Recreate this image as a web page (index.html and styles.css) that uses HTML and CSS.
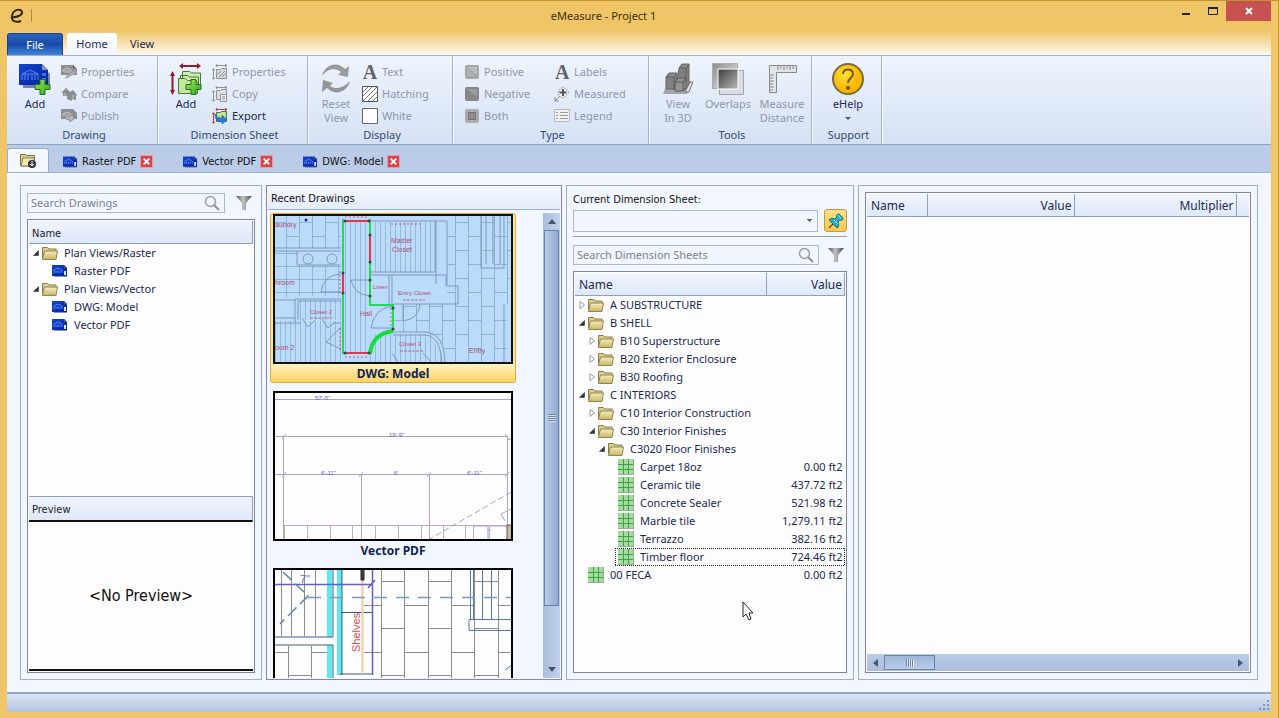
FILE: index.html
```html
<!DOCTYPE html>
<html lang="en">
<head>
  <meta charset="UTF-8">
  <title>eMeasure - Project 1</title>
  <link rel="stylesheet" href="styles.css">
</head>
<body>

  <!-- shared icons -->
  <svg class="sprite" aria-hidden="true">
    <defs>
      <linearGradient id="gFolder" x1="0" y1="0" x2="0" y2="1"><stop offset="0" stop-color="#f4edc0"/><stop offset="1" stop-color="#c9b663"/></linearGradient>
      <linearGradient id="gBlue" x1="0" y1="0" x2="1" y2="1"><stop offset="0" stop-color="#1546cf"/><stop offset="1" stop-color="#03229c"/></linearGradient>
      <linearGradient id="gGreen" x1="0" y1="0" x2="1" y2="1"><stop offset="0" stop-color="#a0e860"/><stop offset="1" stop-color="#2fa51c"/></linearGradient>
      <linearGradient id="gGrey" x1="0" y1="0" x2="1" y2="1"><stop offset="0" stop-color="#8a8a8a"/><stop offset="1" stop-color="#f0f0f0"/></linearGradient>
      <linearGradient id="gDark" x1="0" y1="0" x2="1" y2="1"><stop offset="0" stop-color="#3c3c3c"/><stop offset="1" stop-color="#b8b8b8"/></linearGradient>
      <linearGradient id="gFunnel" x1="0" y1="0" x2="1" y2="0"><stop offset="0" stop-color="#555"/><stop offset=".45" stop-color="#c4c4c4"/><stop offset="1" stop-color="#444"/></linearGradient>
      <radialGradient id="gHelp" cx=".4" cy=".35"><stop offset="0" stop-color="#ffdf3a"/><stop offset="1" stop-color="#f8b800"/></radialGradient>
    </defs>
    <symbol id="folder" viewBox="0 0 16 14">
      <path d="M.5 12.500V1.500h5l1.500 1.500h7v2" fill="#dccf8e" stroke="#8b7c45"/>
      <path d="M.5 12.500l2-7.500h13l-1.500 8.500H.5z" fill="url(#gFolder)" stroke="#8f8350"/>
    </symbol>
    <symbol id="drawing" viewBox="0 0 16 12">
      <path d="M2 2h11l2 3v7H2z" fill="#8191b5"/>
      <path d="M0 0h12l3 3v8H0z" fill="url(#gBlue)"/>
      <path d="M2 8V5l4-2 4 2v3M4 8V6M6 8V5M8 8V6" fill="none" stroke="#5b85f2"/>
      <path d="M12 6h2v4h-2z" fill="#dce7ff"/>
      <path d="M12 0l3 3h-3z" fill="#4a5878"/>
    </symbol>
    <symbol id="drawing-grey" viewBox="0 0 16 16">
      <path d="M0 1h12l4 4v6H0z" fill="#8c8e92"/>
      <path d="M2 8V6l4-2 4 2v2M4 9V6M6 9V6M8 9V6" fill="none" stroke="#c9cbd0"/>
      <path d="M12 1l3 3h-3z" fill="#666"/>
      <path d="M5 12l9-6 1 3-8 5-3 1z" fill="#a8aaae"/>
    </symbol>
    <symbol id="publish" viewBox="0 0 16 16">
      <path d="M0 1h12l4 4v6H0z" fill="#8c8e92"/>
      <path d="M2 8V6l4-2 4 2v2M4 9V6M6 9V6M8 9V6" fill="none" stroke="#c9cbd0"/>
      <path d="M3 8c1 3 4 4 6 4v2l5-4-5-4v2C7 9 5 9 3 8z" fill="#b3b5b9" stroke="#8c8e92"/>
    </symbol>
    <symbol id="compare" viewBox="0 0 16 16">
      <path d="M0 7l5-5 4 4 3-2 4 5-1 1v4l-4-1v2l-5-2v-3H2V7z" fill="#8c8e92"/>
      <path d="M4 7v3M12 9v3" fill="none" stroke="#c9cbd0"/>
    </symbol>
    <symbol id="big-drawing" viewBox="0 0 32 32">
      <path d="M4 4h20l7 7v14H4z" fill="#7484aa"/>
      <path d="M0 1h23l6 6v15H0z" fill="url(#gBlue)"/>
      <path d="M23 1l6 6h-6z" fill="#8797b5"/>
      <path d="M3 17v-6l8-4 8 4v6M3 11h16M6 17v-5M9 17v-5M13 17v-5M16 17v-5" fill="none" stroke="#5b8bf5"/>
      <path d="M23 10h4v3h-4zM23 15h4v3h-4z" fill="#3f6ceb"/>
      <use href="#plus"/>
    </symbol>
    <symbol id="plus" viewBox="0 0 32 32">
      <path d="M21 16.500h5v5h5v5h-5v5h-5v-5h-5v-5h5z" fill="url(#gGreen)" stroke="#24701b"/>
    </symbol>
    <symbol id="big-sheet" viewBox="0 0 32 32">
      <path d="M11 3h18M2.500 10v19" stroke="#8c1d2b" stroke-width="2"/>
      <path d="M13 0v6L9 3zM27 0v6l4-3zM0 13h5L2.500 8zM0 27h5l-2.500 5z" fill="#8c1d2b"/>
      <path d="M12.500 24V8.500h7l2 1.500h9V24zM10.500 27V12.500h7l2 1.500h9V27z" fill="#d5edb4" stroke="#3e7d35"/>
      <path d="M8.500 30.500v-15h7l2 2h9l1 3v10z" fill="#c5e79c" stroke="#3e7d35"/>
      <use href="#plus"/>
    </symbol>
    <symbol id="sheet-grey" viewBox="0 0 16 16">
      <path d="M4 1.500h11M1.500 5v10M5 0L4 1.500 5 3M13 0l2 1.500L13 3M0 6l1.500-1L3 6M0 14l1.500 1L3 14" fill="none" stroke="#8f9195"/>
      <path d="M4.500 14.500v-9h4l1-1h5v10z" fill="#d8d9db" stroke="#8f9195"/>
      <path d="M7 13l6-6M10 13l4-4M6 10l3-3" stroke="#8f9195"/>
    </symbol>
    <symbol id="copy" viewBox="0 0 16 16">
      <path d="M4 1.500h11M1.500 5v10M5 0L4 1.500 5 3M13 0l2 1.500L13 3M0 6l1.500-1L3 6M0 14l1.500 1L3 14" fill="none" stroke="#8f9195"/>
      <path d="M4.500 13.500v-9h4l1-1h5v10z" fill="#dedfe1" stroke="#8f9195"/>
      <path d="M8.500 15.500v-7h6v7zM10 11h3M10 13h3" fill="#f0f0f1" stroke="#8f9195"/>
    </symbol>
    <symbol id="export" viewBox="0 0 16 16">
      <path d="M4 1.500h11M1.500 5v10M5 0L4 1.500 5 3M13 0l2 1.500L13 3M0 6l1.500-1L3 6M0 14l1.500 1L3 14" fill="none" stroke="#c0394a"/>
      <path d="M4.500 13.500v-9h4l1-1h5v10z" fill="#c1e49b" stroke="#3e7d35"/>
      <path d="M3 6c1 3 4 4 7 4V7l5 5-5 4v-2c-5 0-7-3-7-8z" fill="#2e7be0" stroke="#1a4c9c" stroke-width=".5"/>
    </symbol>
    <symbol id="reset" viewBox="0 0 32 32">
      <path d="M2 13C4 4 13-1 21 3l4 3 4-3-1 11-10-2 3-3C15 4 7 6 2 13z" fill="#999b9f"/>
      <path d="M30 18c-2 9-11 14-19 10l-4-3-5 4 1-12 10 3-3 3c6 4 14 2 20-5z" fill="#929498"/>
    </symbol>
    <symbol id="hatch" viewBox="0 0 16 16">
      <path d="M.5.500h15v15H.5z" fill="#fff" stroke="#555"/>
      <path d="M1 6l5-5M1 10l9-9M1 15L15 1M6 15l9-9M11 15l4-4" stroke="#777"/>
    </symbol>
    <symbol id="white" viewBox="0 0 16 16"><path d="M.5.500h15v15H.5z" fill="#fff" stroke="#666"/></symbol>
    <symbol id="positive" viewBox="0 0 16 16">
      <rect x="1" y="1" width="14" height="14" rx="2" fill="#a3a5a8"/>
      <path d="M3 3h10v8z" fill="#b9bbbe"/><path d="M3 3v9h8z" fill="#b0b2b5"/>
    </symbol>
    <symbol id="negative" viewBox="0 0 16 16">
      <rect x="1" y="1" width="14" height="14" rx="2" fill="#85878b"/>
      <path d="M3 3h10v8z" fill="#9b9da0"/>
    </symbol>
    <symbol id="both" viewBox="0 0 16 16">
      <rect x="1" y="1" width="14" height="14" rx="2" fill="#a9abae"/>
      <path d="M4.500 4.500h7v7h-7z" fill="#8c8e91" stroke="#707275"/>
    </symbol>
    <symbol id="measured" viewBox="0 0 16 16">
      <path d="M5 4l4-3 6 5-5 6-6-2z" fill="#efefef" stroke="#97999d" stroke-dasharray="2 1"/>
      <path d="M9 3v7M5.500 6.500h7" stroke="#55575a" stroke-width="2"/>
      <path d="M6 10l-5 5M1 11v4h4" fill="none" stroke="#8b8d91"/>
    </symbol>
    <symbol id="legend" viewBox="0 0 16 16">
      <path d="M.5 1.500h15v12H.5z" fill="#f1f1f1" stroke="#b6b8bb"/>
      <path d="M2 4.500h2M2 7.500h2M2 10.500h2M6 4.500h8M6 7.500h8M6 10.500h8" stroke="#999b9e"/>
    </symbol>
    <symbol id="view3d" viewBox="0 0 32 32">
      <path d="M1 31l5-13h22l3 2-6 11z" fill="#a5a5a7"/>
      <path d="M4 14l3-4h8v7l2-11V5l3-4h7v20l-3 5H4z" fill="#818183" stroke="#666"/>
      <path d="M4 14h8l3-4M12 14v13M17 5h7l3-4M24 5v13M13 19l3-4h8l-3 4zM13 19v9h8v-9M21 28l3-4v-9" fill="#939395" stroke="#5c5c5e"/>
      <path d="M23 29l5-10h3l-4 10z" fill="#ddd" stroke="#777"/>
    </symbol>
    <symbol id="overlaps" viewBox="0 0 32 32">
      <path d="M.5.500h25v25H.5z" fill="url(#gGrey)" stroke="#a9abad"/>
      <path d="M7.500 7.500h24v24h-24z" fill="#d9dce2" stroke="#a1a3a6"/>
      <path d="M6 6h20v20H6z" fill="url(#gDark)" stroke="#fff"/>
    </symbol>
    <symbol id="ruler" viewBox="0 0 32 32">
      <path d="M3.500 2.500h27v7h-20v20h-7z" fill="#e3e4e8" stroke="#88898d"/>
      <path d="M4 12h4M4 15h3M4 18h4M4 21h3M4 24h4M4 27h3M12 3v4M15 3v3M18 3v4M21 3v3M24 3v4M27 3v3" stroke="#88898d"/>
    </symbol>
    <symbol id="help" viewBox="0 0 32 32">
      <circle cx="16" cy="16" r="15" fill="url(#gHelp)" stroke="#7c6c3b" stroke-width="2"/>
      <path d="M11 11c0-6 10-6 10 0 0 4-5 4-5 9" fill="none" stroke="#74571a" stroke-width="2"/>
      <circle cx="16" cy="25" r="2" fill="#74571a"/>
    </symbol>
    <symbol id="home-tab" viewBox="0 0 16 16">
      <path d="M.5 13V1.500h5l1 1h8V13z" fill="#d9cd8a" stroke="#7e7140"/>
      <path d="M1 13l2-8h11v8z" fill="#efe7b6" stroke="#8f8350"/>
      <circle cx="12" cy="11" r="4" fill="#33343a"/>
      <path d="M12 8v4M10 11l2 2 2-2" fill="none" stroke="#fff"/>
    </symbol>
    <symbol id="close" viewBox="0 0 14 14">
      <path d="M.5.500h13v13H.5z" fill="#d9434a" stroke="#eba0a2"/>
      <path d="M4 4l6 6M10 4l-6 6" stroke="#fff" stroke-width="2"/>
    </symbol>
    <symbol id="search" viewBox="0 0 16 16">
      <circle cx="6.500" cy="6.500" r="5" fill="#eef4fd" stroke="#9aa0ab" stroke-width="1.500"/>
      <path d="M10 10l5 5" stroke="#8c8e94" stroke-width="2"/>
    </symbol>
    <symbol id="funnel" viewBox="0 0 16 16">
      <path d="M0 1h16L10 8v7H6V8z" fill="url(#gFunnel)"/>
    </symbol>
    <symbol id="pin" viewBox="0 0 16 16">
      <path d="M6 10l-5 5" stroke="#555" stroke-width="1.500"/>
      <path d="M1 7c1-2 4-2 6-1l2-2c-1-2 0-3 2-3l4 4c0 2-1 3-3 2l-2 2c1 3 1 5-1 6z" fill="#27afc4" stroke="#146f86"/>
      <path d="M6 7l4 4M10 2l3 4" stroke="#8fe3ee"/>
    </symbol>
    <symbol id="grid" viewBox="0 0 16 16">
      <path d="M0 0h16v16H0z" fill="#9aa79a"/>
      <path d="M0 0h15v15H0z" fill="#a3dd9d"/>
      <path d="M5.500 0v15M10.500 0v15M0 5.500h15M0 10.500h15" stroke="#3f9f45"/>
    </symbol>
    <symbol id="open" viewBox="0 0 8 8"><path d="M6.500 1.500v5h-5z" fill="#333" stroke="#222" stroke-width=".5"/></symbol>
    <symbol id="shut" viewBox="0 0 8 8"><path d="M2 .5v7L6.500 4z" fill="#fff" stroke="#999"/></symbol>
  </svg>

  <div class="window">
    <header class="titlebar">
      <svg class="app-logo" viewBox="0 0 24 16" aria-hidden="true">
        <path d="M2 9c5 1 12-2 11-5-1-4-9-3-10 4-1 5 4 7 9 5" fill="none" stroke="#2e2708" stroke-width="2"/>
        <path d="M22.500 1v13" stroke="#b58d3c"/>
      </svg>
      <h1 class="title">eMeasure - Project 1</h1>
      <div class="window-buttons">
        <button aria-label="Minimize"><svg viewBox="0 0 10 10"><path d="M1 8h8" stroke="#222" stroke-width="2"/></svg></button>
        <button aria-label="Maximize"><svg viewBox="0 0 10 10"><path d="M.5 2h9v6.500h-9z" fill="none" stroke="#222"/><path d="M0 2h10" stroke="#222" stroke-width="2"/></svg></button>
        <button class="close-window" aria-label="Close"><svg viewBox="0 0 10 10"><path d="M2 2l6 6M8 2L2 8" stroke="#fff" stroke-width="2"/></svg></button>
      </div>
    </header>

    <nav class="ribbon-tabs">
      <button class="file-tab">File</button>
      <button class="ribbon-tab active">Home</button>
      <button class="ribbon-tab">View</button>
    </nav>

    <section class="ribbon">
      <div class="group group-drawing">
        <div class="group-body">
          <button class="big"><svg><use href="#big-drawing"/></svg>Add</button>
          <div class="stack">
            <button class="small" disabled><svg><use href="#drawing-grey"/></svg>Properties</button>
            <button class="small" disabled><svg><use href="#compare"/></svg>Compare</button>
            <button class="small" disabled><svg><use href="#publish"/></svg>Publish</button>
          </div>
        </div>
        <div class="group-name">Drawing</div>
      </div>
      <div class="group group-sheet">
        <div class="group-body">
          <button class="big"><svg><use href="#big-sheet"/></svg>Add</button>
          <div class="stack">
            <button class="small" disabled><svg><use href="#sheet-grey"/></svg>Properties</button>
            <button class="small" disabled><svg><use href="#copy"/></svg>Copy</button>
            <button class="small"><svg><use href="#export"/></svg>Export</button>
          </div>
        </div>
        <div class="group-name">Dimension Sheet</div>
      </div>
      <div class="group group-display">
        <div class="group-body">
          <button class="big" disabled><svg><use href="#reset"/></svg>Reset<br>View</button>
          <div class="stack">
            <button class="small" disabled><span class="letter">A</span>Text</button>
            <button class="small" disabled><svg><use href="#hatch"/></svg>Hatching</button>
            <button class="small" disabled><svg><use href="#white"/></svg>White</button>
          </div>
        </div>
        <div class="group-name">Display</div>
      </div>
      <div class="group group-type">
        <div class="group-body">
          <div class="stack">
            <button class="small" disabled><svg><use href="#positive"/></svg>Positive</button>
            <button class="small" disabled><svg><use href="#negative"/></svg>Negative</button>
            <button class="small" disabled><svg><use href="#both"/></svg>Both</button>
          </div>
          <div class="stack">
            <button class="small" disabled><span class="letter">A</span>Labels</button>
            <button class="small" disabled><svg><use href="#measured"/></svg>Measured</button>
            <button class="small" disabled><svg><use href="#legend"/></svg>Legend</button>
          </div>
        </div>
        <div class="group-name">Type</div>
      </div>
      <div class="group group-tools">
        <div class="group-body">
          <button class="big" disabled><svg><use href="#view3d"/></svg>View<br>In 3D</button>
          <button class="big" disabled><svg><use href="#overlaps"/></svg>Overlaps</button>
          <button class="big" disabled><svg><use href="#ruler"/></svg>Measure<br>Distance</button>
        </div>
        <div class="group-name">Tools</div>
      </div>
      <div class="group group-support">
        <div class="group-body">
          <button class="big"><svg><use href="#help"/></svg>eHelp<span class="arrow-down"></span></button>
        </div>
        <div class="group-name">Support</div>
      </div>
    </section>

    <nav class="doc-tabs">
      <button class="home-doc" aria-label="Project"><svg><use href="#home-tab"/></svg></button>
      <div class="doc-tab"><svg class="doc-icon"><use href="#drawing"/></svg><a href="#">Raster PDF</a><button aria-label="Close Raster PDF"><svg><use href="#close"/></svg></button></div>
      <div class="doc-tab"><svg class="doc-icon"><use href="#drawing"/></svg><a href="#">Vector PDF</a><button aria-label="Close Vector PDF"><svg><use href="#close"/></svg></button></div>
      <div class="doc-tab"><svg class="doc-icon"><use href="#drawing"/></svg><a href="#">DWG: Model</a><button aria-label="Close DWG: Model"><svg><use href="#close"/></svg></button></div>
    </nav>

    <main class="content">
      <section class="panel drawings">
        <div class="search-row">
          <div class="search-box">
            <input type="text" aria-label="Search Drawings" placeholder="Search Drawings">
            <svg><use href="#search"/></svg>
          </div>
          <button class="filter" aria-label="Filter drawings"><svg><use href="#funnel"/></svg></button>
        </div>
        <div class="box">
          <div class="box-head plain">Name</div>
          <ul class="tree">
            <li><svg class="twisty"><use href="#open"/></svg><svg class="node"><use href="#folder"/></svg>Plan Views/Raster</li>
            <li class="child"><svg class="node"><use href="#drawing"/></svg>Raster PDF</li>
            <li><svg class="twisty"><use href="#open"/></svg><svg class="node"><use href="#folder"/></svg>Plan Views/Vector</li>
            <li class="child"><svg class="node"><use href="#drawing"/></svg>DWG: Model</li>
            <li class="child"><svg class="node"><use href="#drawing"/></svg>Vector PDF</li>
          </ul>
          <div class="box-head plain preview-head">Preview</div>
          <div class="preview">&lt;No Preview&gt;</div>
        </div>
      </section>

      <section class="panel recent">
        <h2 class="recent-head">Recent Drawings</h2>
        <div class="recent-body">
          <div class="thumbs">
            <figure class="thumb selected">
              <svg viewBox="0 0 240 150">
                <defs>
                  <pattern id="bricks" width="26" height="28" patternUnits="userSpaceOnUse"><path d="M.5 0v28M13.500 0v28M0 8.500h13M13 22.500h13" stroke="#7f9fc0" fill="none" stroke-width=".7"/></pattern>
                  <pattern id="stripes" width="5" height="10" patternUnits="userSpaceOnUse"><path d="M2.500 0v10" stroke="#86a9d0" stroke-width=".7"/></pattern>
                  <pattern id="squares" width="13" height="13" patternUnits="userSpaceOnUse"><path d="M.5 0v13M0 .5h13" stroke="#7ca3c9" stroke-width=".7"/></pattern>
                </defs>
                <path d="M0 0h240v150H0z" fill="#bbdbfa"/>
                <path d="M0 0h68v34H0zM120 90h114v60h-60q0-32-30-32h-24zM174 0h66v90h-66z" fill="url(#bricks)"/>
                <path d="M0 36h24v48H0zM24 52h44v30H24z" fill="url(#squares)"/>
                <path d="M72 8h24v130H72zM99 8h62v50H99zM0 107h68v43H0zM26 86h42v20H26zM98 120h60l14 30H96z" fill="url(#stripes)"/>
                <g fill="none" stroke="#8294c2">
                  <path d="M0 34h68M0 37h68M24 37v14h43M22 108V85h46M25 106V87h43M98 7h76M98 58h64V7M98 61h75V72h12v18h-64M116 61v29M119 61v29M163 7v63M174 7v64"/>
                  <path d="M0 86h22M0 104h22M0 109h28M60 109h8M29 104l6 9 7-7M49 105l6 9 7-6M120 118h33q19 2 19 32M120 121h33q15 2 16 29M208 0v54h23V0M213 0v50M220 0v50M227 0v50M231 90v60"/>
                  <path d="M78 66h18M78 66q3 14 18 16M68 60q-18 1-20 18h20M68 113l-15 15 15 7M98 114h22M98 114q3-20 22-22M130 91v16q16-2 17-17M119 139l7 10M150 139l8 9"/>
                  <circle cx="35" cy="45" r="5"/><circle cx="59" cy="45" r="5"/>
                </g>
                <path d="M70 5v135M97 5v86h23v26" fill="none" stroke="#20dc55" stroke-width="2"/>
                <path d="M120 117q-21 3-23 23" fill="none" stroke="#16df3d" stroke-width="4"/>
                <path d="M72 7h24M97 21v27M70 59v20M72 139h24" stroke="#e03850" stroke-width="2"/>
                <path d="M72 3h24M72 143h24M67 57v24M67 114v22M118 94v20M118 10h30" stroke="#c0496b" stroke-dasharray="2 2" stroke-width=".8"/>
                <g fill="#3a4156"><circle cx="72" cy="7" r="1.500"/><circle cx="96" cy="7" r="1.500"/><circle cx="97" cy="21" r="1.500"/><circle cx="97" cy="48" r="1.500"/><circle cx="70" cy="79" r="1.500"/><circle cx="70" cy="59" r="1.500"/><circle cx="97" cy="66" r="1.500"/><circle cx="97" cy="82" r="1.500"/><circle cx="72" cy="139" r="1.500"/><circle cx="96" cy="139" r="1.500"/><circle cx="120" cy="115" r="1.500"/><circle cx="120" cy="94" r="1.500"/><circle cx="33" cy="6" r="1.500" fill="#1227b8"/></g>
                <g class="plan-text">
                  <text x="2" y="13">aundry</text><text x="118" y="29">Master</text><text x="119" y="38">Closet</text>
                  <text x="2" y="71">hroom</text><text x="87" y="102">Hall</text><text x="196" y="139">Entry</text><text x="2" y="136">oom 2</text>
                </g>
                <g class="plan-text tiny">
                  <text x="100" y="75">Linen</text><text x="125" y="81">Entry Closet</text><text x="37" y="100">Closet 2</text><text x="126" y="132">Closet 3</text>
                  <path d="M37 104h22M130 86h22M127 137h24" stroke="#b0567d" stroke-dasharray="3 1" stroke-width=".8"/>
                </g>
                <path d="M1 1h238v148H1z" fill="none" stroke="#111" stroke-width="2"/>
              </svg>
              <figcaption>DWG: Model</figcaption>
            </figure>
            <figure class="thumb">
              <svg viewBox="0 0 240 150">
                <path d="M0 0h240v150H0z" fill="#fdfdff"/>
                <path d="M1 8.500h238M1 45.500h233M1 83.500h233M234 48h6M9 48l4-5M232 43l4 6M9 86l4-5M86 86l4-5M154 86l4-5M232 86l4-5M240 117l-12 6 4 7M215 136v12M214 139h4M200 135h34" fill="none" stroke="#a3a1d6"/>
                <path d="M10.500 45v104M88.500 83v66M156.500 83v66M234.500 45v90" stroke="#aaa9b8"/>
                <path d="M11 134.500h223" stroke="#c3a3bb"/>
                <path d="M11.500 135v14M34.500 135v14M57.500 135v14M79.500 135v14M102.500 135v14M125.500 135v14M148.500 135v14M170.500 135v14M192.500 135v14M200.500 135v14M216.500 135v14" stroke="#b5b5ba"/>
                <path d="M155 149l85-49" stroke="#aaa" stroke-dasharray="6 3"/>
                <path d="M234 134h5v15h-5z" fill="#c8bca8" stroke="#6d4b40"/>
                <g class="dim-text"><text x="42" y="9">57'-5"</text><text x="116" y="46">19'-9"</text><text x="48" y="84">6'-11"</text><text x="121" y="84">6'</text><text x="194" y="84">6'-11"</text></g>
                <path d="M1 1h238v148H1z" fill="none" stroke="#000" stroke-width="2"/>
              </svg>
              <figcaption>Vector PDF</figcaption>
            </figure>
            <figure class="thumb">
              <svg viewBox="0 0 240 150">
                <path d="M0 0h240v150H0z" fill="#fdfdfd"/>
                <path d="M54 0h5v69h-5zM64 0h5v107h-5zM54 77h5v40h-5z" fill="#5fe9ee"/>
                <g fill="none" stroke="#8b8c90">
                  <path d="M8.500 0v68M18.500 0v68M31.500 0v68M42.500 0v68M15.500 78v72M38.500 78v72M0 84.500h15M15 107.500h23M38 84.500h16"/>
                  <path d="M108.500 0v150M131.500 0v150M155.500 0v150M178.500 0v150M201.500 0v150M225.500 0v150"/>
                  <path d="M108 13.500h23M108 60.500h23M108 107.500h23M131 37.500h24M131 84.500h24M155 13.500h23M155 60.500h23M155 107.500h23M178 37.500h23M178 84.500h23M201 13.500h24M201 60.500h24M201 107.500h24M225 37.500h15M225 84.500h15M91 37.500h17M91 84.500h17"/>
                </g>
                <path d="M0 69h60M0 77h60M60 0v69M60 77v73M69 0v107M67 106h33M68 44.500h31" fill="none" stroke="#3a5a86"/>
                <path d="M197.500 0v52M200.500 0v52M209.500 0v52M218.500 0v52M196 51.500h44v11h-44zM232 102l8-6" fill="none" stroke="#5875ae"/>
                <path d="M89.500 12v94" stroke="#f2c99e" stroke-width="2"/>
                <path d="M0 16.500h99M99.500 0v107M95 20l7-8" fill="none" stroke="#6660bb" stroke-width="1.500"/>
                <path d="M35 29.500h205" stroke="#789ac0" stroke-dasharray="13 9" stroke-width="1.500"/>
                <path d="M10 4l25 24-28 28" fill="none" stroke="#6080b0" stroke-dasharray="12 5" stroke-width="1.500"/>
                <path d="M88 0v12h3V0z" fill="#444" stroke="#222"/>
                <text class="shelf-text" x="-84" y="87" transform="rotate(-90)">Shelves</text>
                <text class="mark-text" x="27" y="15">7"</text>
                <path d="M1 1h238v148H1z" fill="none" stroke="#000" stroke-width="2"/>
              </svg>
            </figure>
          </div>
          <div class="vscroll">
            <span class="arrow-up"></span>
            <div class="vscroll-thumb"></div>
            <span class="arrow-down"></span>
          </div>
        </div>
      </section>

      <section class="panel sheets">
        <label class="sheet-label" for="sheet">Current Dimension Sheet:</label>
        <div class="search-row sheet-row">
          <select id="sheet"><option></option></select>
          <button class="pin" aria-label="Pin sheet"><svg><use href="#pin"/></svg></button>
        </div>
        <hr>
        <div class="search-row">
          <div class="search-box">
            <input type="text" aria-label="Search Dimension Sheets" placeholder="Search Dimension Sheets">
            <svg><use href="#search"/></svg>
          </div>
          <button class="filter" aria-label="Filter sheets"><svg><use href="#funnel"/></svg></button>
        </div>
        <div class="box">
          <table class="data sheet-table">
            <thead><tr><th>Name</th><th class="num value-col">Value</th></tr></thead>
            <tbody>
              <tr><td><div class="cell"><svg class="twisty"><use href="#shut"/></svg><svg class="node"><use href="#folder"/></svg>A SUBSTRUCTURE</div></td><td></td></tr>
              <tr><td><div class="cell"><svg class="twisty"><use href="#open"/></svg><svg class="node"><use href="#folder"/></svg>B SHELL</div></td><td></td></tr>
              <tr><td><div class="cell l1"><svg class="twisty"><use href="#shut"/></svg><svg class="node"><use href="#folder"/></svg>B10 Superstructure</div></td><td></td></tr>
              <tr><td><div class="cell l1"><svg class="twisty"><use href="#shut"/></svg><svg class="node"><use href="#folder"/></svg>B20 Exterior Enclosure</div></td><td></td></tr>
              <tr><td><div class="cell l1"><svg class="twisty"><use href="#shut"/></svg><svg class="node"><use href="#folder"/></svg>B30 Roofing</div></td><td></td></tr>
              <tr><td><div class="cell"><svg class="twisty"><use href="#open"/></svg><svg class="node"><use href="#folder"/></svg>C INTERIORS</div></td><td></td></tr>
              <tr><td><div class="cell l1"><svg class="twisty"><use href="#shut"/></svg><svg class="node"><use href="#folder"/></svg>C10 Interior Construction</div></td><td></td></tr>
              <tr><td><div class="cell l1"><svg class="twisty"><use href="#open"/></svg><svg class="node"><use href="#folder"/></svg>C30 Interior Finishes</div></td><td></td></tr>
              <tr><td><div class="cell l2"><svg class="twisty"><use href="#open"/></svg><svg class="node"><use href="#folder"/></svg>C3020 Floor Finishes</div></td><td></td></tr>
              <tr><td><div class="cell leaf"><svg class="node"><use href="#grid"/></svg>Carpet 18oz</div></td><td class="num">0.00 ft2</td></tr>
              <tr><td><div class="cell leaf"><svg class="node"><use href="#grid"/></svg>Ceramic tile</div></td><td class="num">437.72 ft2</td></tr>
              <tr><td><div class="cell leaf"><svg class="node"><use href="#grid"/></svg>Concrete Sealer</div></td><td class="num">521.98 ft2</td></tr>
              <tr><td><div class="cell leaf"><svg class="node"><use href="#grid"/></svg>Marble tile</div></td><td class="num">1,279.11 ft2</td></tr>
              <tr><td><div class="cell leaf"><svg class="node"><use href="#grid"/></svg>Terrazzo</div></td><td class="num">382.16 ft2</td></tr>
              <tr class="focused"><td><div class="cell leaf"><svg class="node"><use href="#grid"/></svg>Timber floor</div></td><td class="num">724.46 ft2</td></tr>
              <tr><td><div class="cell root-leaf"><svg class="node"><use href="#grid"/></svg>00 FECA</div></td><td class="num">0.00 ft2</td></tr>
            </tbody>
          </table>
        </div>
      </section>

      <section class="panel details">
        <div class="box">
          <table class="data detail-table">
            <thead><tr><th class="name-col">Name</th><th class="num amount-col">Value</th><th class="num">Multiplier</th><th class="end-col"></th></tr></thead>
          </table>
          <div class="hscroll">
            <span class="arrow-left"></span>
            <div class="hscroll-thumb"></div>
            <span class="arrow-right"></span>
          </div>
        </div>
      </section>
    </main>

    <footer class="statusbar">
      <svg class="grip" viewBox="0 0 12 12"><path d="M8 0h2v2H8zM4 4h2v2H4zM8 4h2v2H8zM0 8h2v2H0zM4 8h2v2H4zM8 8h2v2H8z" fill="#7e95bd"/></svg>
    </footer>
  </div>

  <svg class="cursor" viewBox="0 0 12 20" aria-hidden="true"><path d="M1 1v15l3-3 3 6 2-1-2-6h4z" fill="#fff" stroke="#222"/></svg>

</body>
</html>
```

FILE: styles.css
```css
* {
  box-sizing: border-box;
}

body {
  margin: 0;
  font-family: "Segoe UI", "Noto Sans", sans-serif;
  font-size: 11px;
  line-height: 16px;
  color: #1b2a50;
  background: #efc568;
}

button {
  font: inherit;
  color: inherit;
  background: none;
  border: 0;
  padding: 0;
}

svg {
  display: block;
  flex: none;
}

.sprite {
  position: absolute;
  width: 0;
  height: 0;
}

.window {
  display: flex;
  flex-direction: column;
  height: 100vh;
  padding: 0 7px 6px;
  border-top: 1px solid #c0932c;
  border-right: 1px solid #c99a2c;
}

/* title bar */

.titlebar {
  display: flex;
  height: 29px;
}

.app-logo {
  width: 24px;
  height: 16px;
  margin: 7px 2px;
}

.title {
  flex: 1;
  margin: 0;
  padding-top: 7px;
  font-size: 11px;
  font-weight: normal;
  text-align: center;
  color: #3c3010;
}

.window-buttons {
  display: flex;
  height: 20px;
}

.window-buttons button {
  display: flex;
  justify-content: center;
  align-items: center;
  width: 27px;
}

.window-buttons svg {
  width: 10px;
  height: 10px;
}

.window-buttons .close-window {
  width: 45px;
  background: #c75050;
}

/* ribbon */

.ribbon-tabs {
  display: flex;
  align-items: flex-end;
  height: 25px;
  background: linear-gradient(#efc568, #fdf8ee);
}

.ribbon-tabs button {
  height: 22px;
}

.file-tab {
  width: 56px;
  margin-right: 4px;
  border: 1px solid #1c418c;
  border-bottom: 0;
  border-radius: 3px 3px 0 0;
  background: linear-gradient(#2a62c0, #1b4ba9 50%, #3f86dc);
  color: #fff;
}

.ribbon-tab {
  width: 50px;
  border-radius: 3px 3px 0 0;
}

.ribbon-tab.active {
  background: linear-gradient(#fff, #eff4fd);
}

.ribbon {
  display: flex;
  height: 90px;
  border-top: 1px solid #9fb1cc;
  border-bottom: 1px solid #8ba0c1;
  background: linear-gradient(#eef4fd, #d5e1f4);
}

.group {
  display: flex;
  flex-direction: column;
  padding-top: 5px;
  border-right: 1px solid #a3b4d0;
  box-shadow: 1px 0 0 #f5f8fe;
}

.group-drawing {
  width: 151px;
}

.group-sheet {
  width: 150px;
}

.group-display {
  width: 145px;
}

.group-type {
  width: 196px;
}

.group-tools {
  width: 163px;
}

.group-support {
  width: 70px;
}

.group-body {
  display: flex;
  height: 66px;
  padding-left: 4px;
}

.group-name {
  padding-left: 4px;
  text-align: center;
  color: #34496f;
}

.big {
  display: flex;
  flex-direction: column;
  align-items: center;
  width: 48px;
  padding-top: 2px;
  line-height: 14px;
}

.big svg {
  width: 32px;
  height: 32px;
  margin-bottom: 2px;
}

.big .arrow-down {
  margin-top: 6px;
}

.group-tools .big {
  width: 50px;
}

.group-tools .big:last-child {
  width: 58px;
}

.group-support .big {
  width: 64px;
}

.stack {
  display: flex;
  flex-direction: column;
}

.small {
  display: flex;
  align-items: center;
  gap: 4px;
  height: 22px;
  padding-left: 2px;
}

.small svg {
  width: 16px;
  height: 16px;
}

.group-type .group-body {
  gap: 22px;
  padding-left: 9px;
}

.big:disabled,
.small:disabled {
  color: #8e97a8;
}

.letter {
  width: 16px;
  color: #606266;
  font: bold 20px "Liberation Serif", serif;
}

/* document tabs */

.doc-tabs {
  display: flex;
  align-items: center;
  gap: 30px;
  height: 28px;
  border-bottom: 1px solid #9eb2d3;
  background: #bacce6;
  font-family: Tahoma, "DejaVu Sans Condensed", "Noto Sans", sans-serif;
  font-size: 11px;
}

.home-doc {
  display: flex;
  align-items: center;
  align-self: flex-end;
  width: 42px;
  height: 24px;
  margin-right: -16px;
  padding-left: 12px;
  border: 1px solid #95abcf;
  border-bottom: 0;
  border-radius: 3px 3px 0 0;
  background: #f3f7ff;
}

.home-doc svg {
  width: 16px;
  height: 16px;
}

.doc-tab {
  display: flex;
  align-items: center;
  gap: 4px;
  padding-top: 6px;
}

.doc-tab a {
  color: #111;
  text-decoration: none;
}

.doc-icon {
  width: 15px;
  height: 12px;
}

.doc-tab button svg {
  width: 13px;
  height: 13px;
}

/* panels */

.content {
  display: flex;
  flex: 1;
  gap: 4px;
  min-height: 0;
  padding: 12px 13px;
  background: #f2f7ff;
}

.panel {
  display: flex;
  flex-direction: column;
  min-height: 0;
  padding: 6px;
  border: 1px solid #9bb0cf;
}

.drawings {
  width: 242px;
  padding-top: 7px;
}

.recent {
  width: 296px;
  padding: 1px 1px 0;
  border-color: #86889a;
}

.sheets {
  width: 288px;
}

.details {
  flex: 1;
}

.search-row {
  display: flex;
  align-items: center;
  gap: 6px;
  margin-bottom: 6px;
}

.drawings .search-row {
  gap: 8px;
}

.search-box {
  display: flex;
  flex: 1;
  align-items: center;
  height: 20px;
  padding-right: 4px;
  border: 1px solid #abb8d0;
  background: #f0f5fe;
}

.search-box input {
  flex: 1;
  min-width: 0;
  padding: 0 3px;
  border: 0;
  background: none;
  font: inherit;
  outline: none;
}

.search-box input::placeholder {
  color: #7d828e;
}

.search-box svg,
.filter svg,
.pin svg {
  width: 16px;
  height: 16px;
}

.filter {
  display: flex;
  justify-content: center;
  width: 22px;
}

.box {
  display: flex;
  flex: 1;
  flex-direction: column;
  min-height: 0;
  padding: 1px;
  border: 1px solid #7f8595;
  background: #fdfdfe;
}

.box-head {
  height: 23px;
  padding: 5px 3px 0;
  border-right: 1px solid #8f9db5;
  border-bottom: 1px solid #8f9db5;
  background: linear-gradient(#eff4fd, #dde8f8);
}

.plain {
  color: #1b1e28;
  font-family: Tahoma, "DejaVu Sans Condensed", "Noto Sans", sans-serif;
  font-size: 11px;
}

.preview-head {
  height: 26px;
  border-top: 1px solid #8f9db5;
  border-bottom: 2px solid #111;
}

.preview {
  display: flex;
  justify-content: center;
  align-items: center;
  height: 149px;
  border-bottom: 2px solid #111;
  color: #111;
  font-family: Tahoma, "DejaVu Sans Condensed", "Noto Sans", sans-serif;
  font-size: 16px;
}

.tree {
  flex: 1;
  margin: 0;
  padding: 0;
  list-style: none;
}

.tree li,
.cell {
  display: flex;
  align-items: center;
  height: 18px;
  padding-left: 3px;
}

.tree .child {
  padding-left: 23px;
}

.twisty {
  width: 8px;
  height: 8px;
  margin-right: 2px;
}

.node {
  width: 16px;
  height: 14px;
  margin-right: 6px;
}

.leaf .node,
.root-leaf .node {
  height: 16px;
}

/* recent drawings */

.recent-head {
  height: 23px;
  margin: 0;
  padding: 4px 3px;
  border-bottom: 1px solid #9bb0cf;
  background: linear-gradient(#f4f8ff, #e3ecfa);
  color: #111;
  font-family: Tahoma, "DejaVu Sans Condensed", "Noto Sans", sans-serif;
  font-size: 11px;
  font-weight: normal;
}

.recent-body {
  display: flex;
  flex: 1;
  justify-content: space-between;
  min-height: 0;
  padding: 3px 0 1px 2px;
}

.thumbs {
  display: flex;
  flex-direction: column;
  gap: 7px;
  overflow: hidden;
}

.thumb {
  flex: none;
  margin: 0;
  padding: 0 2px;
  border: 1px solid transparent;
  border-radius: 3px;
}

.thumb.selected {
  border-color: #dfac3e;
  background: linear-gradient(#fbe3a0 85%, #fff0bd 90%, #ffd262);
}

.thumb svg {
  width: 240px;
  height: 150px;
}

.thumb figcaption {
  height: 18px;
  padding-top: 2px;
  color: #102352;
  font-size: 12px;
  font-weight: bold;
  text-align: center;
}

.plan-text {
  fill: #b04a78;
  font: 7px "Liberation Sans", sans-serif;
}

.tiny {
  font-size: 6px;
}

.dim-text {
  fill: #6461b5;
  font: 6px "Liberation Sans", sans-serif;
}

.shelf-text {
  fill: #dc4b4b;
  font: 11px "Liberation Sans", sans-serif;
}

.mark-text {
  fill: #6660bb;
  font: 11px "Liberation Sans", sans-serif;
}

.vscroll {
  display: flex;
  flex-direction: column;
  align-items: center;
  width: 17px;
  padding: 6px 1px;
  background: linear-gradient(90deg, #a9bedc, #c1d2ea);
}

.vscroll-thumb {
  display: flex;
  justify-content: center;
  align-items: center;
  width: 100%;
  height: 376px;
  margin: 6px 0 auto;
  border: 1px solid #6883ab;
  background: linear-gradient(90deg, #bacde7, #8fabd0);
}

.vscroll-thumb::before {
  content: "";
  width: 8px;
  height: 8px;
  background: repeating-linear-gradient(#74869f 0 1px, #d5e0f0 1px 2px);
}

.arrow-up,
.arrow-down {
  border: 4px solid transparent;
}

.arrow-up {
  border-top: 0;
  border-bottom: 5px solid #46566f;
}

.arrow-down {
  border-bottom: 0;
  border-top: 5px solid #46566f;
}

.big .arrow-down {
  border-width: 3px 3px 0;
}

/* dimension sheets */

.sheet-label {
  color: #111;
  font-family: Tahoma, "DejaVu Sans Condensed", "Noto Sans", sans-serif;
  font-size: 11px;
}

.sheet-row {
  margin: 1px 0 4px;
}

select {
  flex: 1;
  height: 22px;
  appearance: none;
  border: 1px solid #abb8d0;
  border-radius: 0;
  background: conic-gradient(from -45deg at 50% 100%, #5a6478 90deg, transparent 0) right 5px center / 6px 3px no-repeat #f0f5fe;
  background: linear-gradient(45deg, transparent 50%, #5a6478 50%) right 8px center / 3px 3px no-repeat, linear-gradient(-45deg, transparent 50%, #5a6478 50%) right 5px center / 3px 3px no-repeat, #f0f5fe;
}

.pin {
  display: flex;
  justify-content: center;
  align-items: center;
  width: 23px;
  height: 23px;
  border: 1px solid #bd9a4e;
  border-radius: 3px;
  background: linear-gradient(#fde08b, #ffc844);
}

hr {
  width: 100%;
  margin: 0 0 8px;
  border: 0;
  border-top: 1px solid #9a9da6;
}

.data {
  width: 100%;
  border-collapse: collapse;
  table-layout: fixed;
}

.data th {
  height: 22px;
  padding: 2px 4px 0;
  border-right: 1px solid #8fa0bd;
  border-bottom: 1px solid #8fa0bd;
  background: linear-gradient(#f1f6fe, #dde8f8);
  font-size: 12px;
  font-weight: normal;
  text-align: left;
}

.data td {
  height: 18px;
  padding: 0;
}

.data .num {
  padding-right: 2px;
  text-align: right;
}

.value-col {
  width: 78px;
}

.l1 {
  padding-left: 13px;
}

.l2 {
  padding-left: 23px;
}

.leaf {
  padding-left: 43px;
}

.root-leaf {
  padding-left: 13px;
}

.focused {
  background:
    repeating-linear-gradient(90deg, #222 0 1px, transparent 1px 2px) 40px 0 / 100% 1px no-repeat,
    repeating-linear-gradient(90deg, #222 0 1px, transparent 1px 2px) 40px 100% / 100% 1px no-repeat,
    repeating-linear-gradient(#222 0 1px, transparent 1px 2px) 40px 0 / 1px 100% no-repeat,
    repeating-linear-gradient(#222 0 1px, transparent 1px 2px) 100% 0 / 1px 100% no-repeat;
}

/* details */

.name-col {
  width: 60px;
}

.amount-col {
  width: 147px;
}

.end-col {
  width: 13px;
}

.detail-table {
  margin-bottom: auto;
}

.detail-table .end-col {
  border-right: 0;
}

.hscroll {
  display: flex;
  align-items: center;
  height: 17px;
  padding: 1px 6px;
  background: linear-gradient(#b9cbe6, #a9bedc);
}

.hscroll-thumb {
  display: flex;
  justify-content: center;
  align-items: center;
  width: 51px;
  height: 15px;
  margin: 0 auto 0 6px;
  border: 1px solid #6883ab;
  background: linear-gradient(#9db6d8, #bacde7);
}

.hscroll-thumb::before {
  content: "";
  width: 8px;
  height: 8px;
  background: repeating-linear-gradient(90deg, #74869f 0 1px, #e2eaf6 1px 2px);
}

.arrow-left,
.arrow-right {
  border: 4px solid transparent;
}

.arrow-left {
  border-left: 0;
  border-right: 5px solid #46566f;
}

.arrow-right {
  border-right: 0;
  border-left: 5px solid #46566f;
}

.statusbar {
  display: flex;
  justify-content: flex-end;
  align-items: flex-end;
  height: 20px;
  border-top: 2px solid #8fa9cf;
  background: linear-gradient(#dbe6f6, #b3c4de);
}

.grip {
  width: 12px;
  height: 12px;
}

.cursor {
  position: fixed;
  left: 742px;
  top: 601px;
  width: 12px;
  height: 20px;
}
```
